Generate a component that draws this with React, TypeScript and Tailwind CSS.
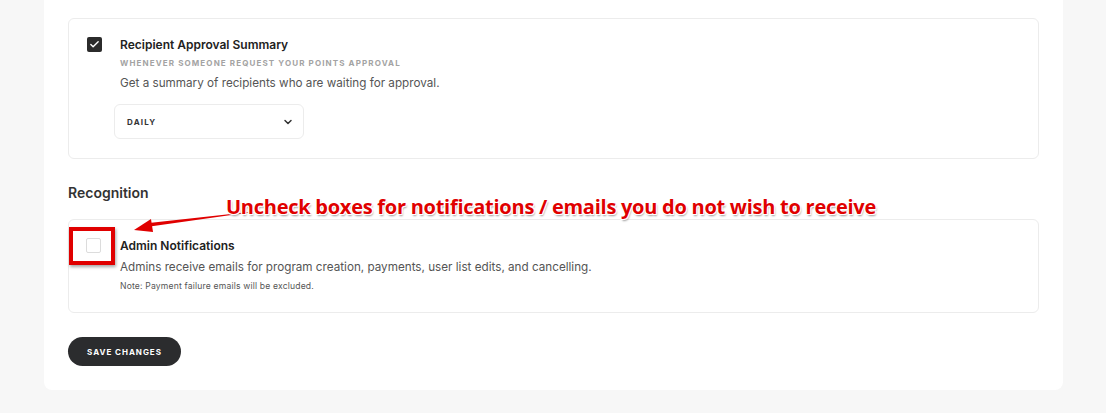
import { Check, ChevronDown } from 'lucide-react';

const font = { fontFamily: 'Inter, "Noto Sans", sans-serif' };

function Checkbox({ checked }: { checked: boolean }) {
    return checked ? (
        <div className="w-[15px] h-[15px] shrink-0 rounded-[2px] bg-[#2b2b2b] flex items-center justify-center">
            <Check size={11} strokeWidth={3} className="text-white" />
        </div>
    ) : (
        <div className="w-[15px] h-[15px] shrink-0 rounded-[2px] border border-[#dcdcdc] bg-white" />
    );
}

export default function App() {
    return (
        <div
            className="min-h-screen bg-[#f7f7f7] pl-[44px] pr-[43px] pb-[24px] text-[#2b2b2b]"
            style={font}
        >
            <div className="relative bg-white rounded-b-lg px-6 pt-[18px] pb-[24px]">
                {/* Recipient approval card */}
                <div className="border border-[#ececec] rounded-md pl-[18px] pt-[18px] pb-[19px] flex gap-[18px]">
                    <Checkbox checked />
                    <div className="flex flex-col">
                        <h3 className="text-[12px] font-semibold leading-[15px] text-[#222]">
                            Recipient Approval Summary
                        </h3>
                        <p className="mt-[5px] text-[8px] font-bold tracking-[0.14em] leading-[12px] text-[#a3a3a3] uppercase">
                            Whenever someone request your points approval
                        </p>
                        <p className="mt-[6px] text-[11.7px] leading-[16px] text-[#555]">
                            Get a summary of recipients who are waiting for approval.
                        </p>
                        <div className="mt-[13px] -ml-[6px] w-[190px] h-[35px] border border-[#ececec] rounded-md flex items-center justify-between pl-[12px] pr-[9px]">
                            <span className="text-[8px] font-bold tracking-[0.15em] text-[#333]">DAILY</span>
                            <ChevronDown size={12} strokeWidth={3} className="text-[#333]" />
                        </div>
                    </div>
                </div>

                <h2 className="mt-[25px] text-[14px] font-semibold leading-[18px] text-[#333]">Recognition</h2>

                {/* Admin notifications card */}
                <div className="mt-[17px] border border-[#ececec] rounded-md pl-[17px] pt-[18px] pb-[20px] flex gap-[19px]">
                    <Checkbox checked={false} />
                    <div className="flex flex-col">
                        <h3 className="text-[12px] font-semibold leading-[15px] text-[#222]">Admin Notifications</h3>
                        <p className="mt-[6px] text-[11.7px] leading-[16px] text-[#555]">
                            Admins receive emails for program creation, payments, user list edits, and cancelling.
                        </p>
                        <p className="mt-[5px] text-[8.6px] tracking-[0.02em] leading-[12px] text-[#555]">
                            Note: Payment failure emails will be excluded.
                        </p>
                    </div>
                </div>

                <button className="mt-[24px] w-[113px] h-[29px] rounded-full bg-[#2b2c2e] text-white text-[8px] font-bold tracking-[0.12em]">
                    SAVE CHANGES
                </button>

                {/* Annotation overlay */}
                <div className="absolute left-[25px] top-[227px] w-[46px] h-[38px] border-[4px] border-[#e00000] shadow-[1px_2px_3px_rgba(0,0,0,0.35)]" />
                <svg className="absolute left-[88px] top-[206px]" width="130" height="30" viewBox="0 0 130 30">
                    <path d="M127 5 L18 20.5 L17 17 Z" fill="#e00000" />
                    <path d="M2 24 L19 13 L21 26 Z" fill="#e00000" />
                </svg>
                <p
                    className="absolute left-[182px] top-[194px] text-[20px] font-bold leading-[26px] text-[#e00000] tracking-[-0.013em] whitespace-nowrap"
                    style={{
                        fontFamily: '"Open Sans", sans-serif',
                        textShadow:
                            '-1px -1px 0 #fff, 1px -1px 0 #fff, -1px 1px 0 #fff, 1px 1px 0 #fff, 1px 2px 2px rgba(0,0,0,0.4)',
                    }}
                >
                    Uncheck boxes for notifications / emails you do not wish to receive
                </p>
            </div>
        </div>
    );
}
